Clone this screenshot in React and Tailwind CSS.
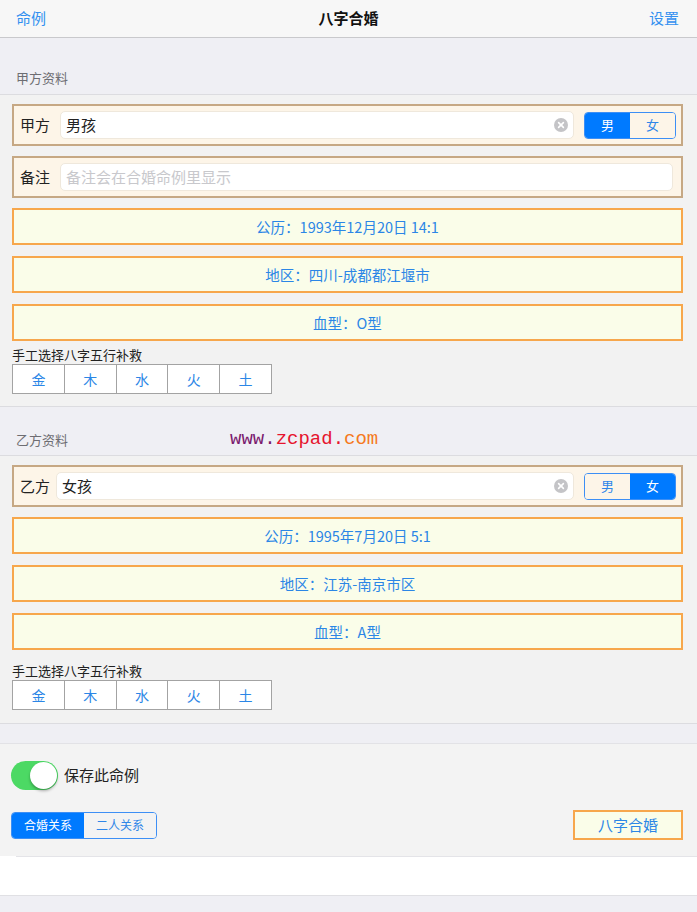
import React from "react";

const font = { fontFamily: '"Noto Sans CJK SC", "Noto Sans", sans-serif' };

function ClearIcon() {
  return (
    <svg width="14" height="14" viewBox="0 0 14 14" className="shrink-0">
      <circle cx="7" cy="7" r="7" fill="#c4c4c7" />
      <path d="M4.6 4.6 L9.4 9.4 M9.4 4.6 L4.6 9.4" stroke="#fff" strokeWidth="1.6" strokeLinecap="round" />
    </svg>
  );
}

function Gender({ male }) {
  return (
    <div className="flex w-[92px] h-[27px] border border-[#3d8ff5] rounded-[4px] overflow-hidden text-[13px] shrink-0">
      <div className={"flex-1 flex items-center justify-center " + (male ? "bg-[#007aff] text-white" : "bg-[#fdf5e8] text-[#2f86e8]")}>男</div>
      <div className={"flex-1 flex items-center justify-center " + (!male ? "bg-[#007aff] text-white" : "bg-[#fdf5e8] text-[#2f86e8]")}>女</div>
    </div>
  );
}

function NameRow({ label, value, male, labelW }) {
  return (
    <div className="flex items-center h-[42px] border-2 border-[#c6a884] bg-[#fdf5e8] pl-[6px] pr-[5px]">
      <span className="text-[15px] text-[#222] shrink-0" style={{ width: labelW }}>{label}</span>
      <div className="flex-1 h-[28px] bg-white rounded-[5px] border border-[#efe8dc] flex items-center pl-[5px] pr-[5px]">
        <span className="flex-1 text-[15px] text-[#222]">{value}</span>
        <ClearIcon />
      </div>
      <div className="w-[10px] shrink-0" />
      <Gender male={male} />
    </div>
  );
}

function NoteRow() {
  return (
    <div className="flex items-center h-[42px] border-2 border-[#c6a884] bg-[#fdf5e8] pl-[6px] pr-[8px]">
      <span className="text-[15px] text-[#222] w-[40px] shrink-0">备注</span>
      <div className="flex-1 h-[28px] bg-white rounded-[5px] border border-[#efe8dc] flex items-center pl-[5px]">
        <span className="text-[15px] text-[#c8c8cc]">备注会在合婚命例里显示</span>
      </div>
    </div>
  );
}

function InfoRow({ text }) {
  return (
    <div className="h-[37px] border-2 border-[#f7a74c] bg-[#fafde9] flex items-center justify-center text-[14.5px] text-[#2b86e6]">
      {text}
    </div>
  );
}

function Elements() {
  const items = ["金", "木", "水", "火", "土"];
  return (
    <div className="flex flex-col">
      <div className="text-[13px] text-[#222] leading-[18px] h-[18px]">手工选择八字五行补救</div>
      <div className="flex w-[260px] h-[30px] border border-[#a3a3a3] bg-white">
        {items.map((t, i) => (
          <div key={t} className={"flex-1 flex items-center justify-center text-[14px] text-[#2b86e6] " + (i > 0 ? "border-l border-[#a3a3a3]" : "")}>
            {t}
          </div>
        ))}
      </div>
    </div>
  );
}

export default function App() {
  return (
    <div className="w-[697px] h-[912px] bg-[#efeff4] flex flex-col overflow-hidden" style={font}>
      {/* Nav */}
      <div className="h-[38px] bg-[#f7f7f7] border-b border-[#c9c9cc] flex items-center justify-between pl-[16px] pr-[18px] shrink-0 relative">
        <span className="text-[15px] text-[#3390f0]">命例</span>
        <span className="absolute left-0 right-0 text-center text-[15px] font-bold text-[#111]">八字合婚</span>
        <span className="text-[15px] text-[#3390f0]">设置</span>
      </div>

      {/* Header 1 */}
      <div className="h-[57px] flex items-end pl-[16px] pb-[7px] border-b border-[#dcdce0] shrink-0">
        <span className="text-[13px] text-[#6d6d72]">甲方资料</span>
      </div>

      {/* Section 1 */}
      <div className="bg-[#f2f2f2] pt-[9px] pb-[12px] px-[12px] pr-[14px] flex flex-col border-b border-[#dcdce0] shrink-0">
        <NameRow label="甲方" value="男孩" male={true} labelW="40px" />
        <div className="h-[10px]" />
        <NoteRow />
        <div className="h-[10px]" />
        <InfoRow text="公历：1993年12月20日 14:1" />
        <div className="h-[11px]" />
        <InfoRow text="地区：四川-成都都江堰市" />
        <div className="h-[11px]" />
        <InfoRow text="血型：O型" />
        <div className="h-[5px]" />
        <Elements />
      </div>

      {/* Header 2 */}
      <div className="h-[49px] flex items-end pl-[16px] pb-[6px] border-b border-[#dcdce0] shrink-0 relative">
        <span className="text-[13px] text-[#6d6d72]">乙方资料</span>
        <span className="ml-[162px] mb-[-2px] text-[19px] leading-[24px]" style={{ fontFamily: '"Liberation Mono", "DejaVu Sans Mono", monospace' }}>
          <span className="text-[#7a1a6e]">www.</span>
          <span className="text-[#e6142e]">zcpad.</span>
          <span className="text-[#f57a1e]">com</span>
        </span>
      </div>

      {/* Section 2 */}
      <div className="bg-[#f2f2f2] pt-[9px] pb-[13px] px-[12px] pr-[14px] flex flex-col border-b border-[#dcdce0] shrink-0">
        <NameRow label="乙方" value="女孩" male={false} labelW="36px" />
        <div className="h-[10px]" />
        <InfoRow text="公历：1995年7月20日 5:1" />
        <div className="h-[11px]" />
        <InfoRow text="地区：江苏-南京市区" />
        <div className="h-[11px]" />
        <InfoRow text="血型：A型" />
        <div className="h-[12px]" />
        <Elements />
      </div>

      <div className="h-[19px] shrink-0" />

      {/* Section 3 */}
      <div className="bg-[#f3f3f3] h-[113px] border-t border-[#e2e2e6] pt-[17px] px-[11px] pr-[14px] flex flex-col shrink-0">
        <div className="flex items-center gap-[6px]">
          <div className="w-[47px] h-[29px] rounded-full bg-[#4cd964] relative">
            <div className="absolute right-[1px] top-[1px] w-[27px] h-[27px] rounded-full bg-white shadow-[0_2px_3px_rgba(0,0,0,0.3)]" />
          </div>
          <span className="text-[15px] text-[#222]">保存此命例</span>
        </div>
        <div className="flex items-center justify-between mt-[20px]">
          <div className="flex w-[146px] h-[27px] border border-[#3d8ff5] rounded-[4px] overflow-hidden text-[12px]">
            <div className="flex-1 flex items-center justify-center bg-[#007aff] text-white">合婚关系</div>
            <div className="flex-1 flex items-center justify-center bg-[#f3f3f3] text-[#2f86e8]">二人关系</div>
          </div>
          <div className="w-[110px] h-[30px] border-2 border-[#f7a74c] bg-[#fafde9] flex items-center justify-center text-[15px] text-[#2b86e6]">
            八字合婚
          </div>
        </div>
      </div>

      {/* White area */}
      <div className="h-[40px] bg-white border-b border-[#e0e0e4] shrink-0 flex flex-col">
        <div className="ml-[16px] border-t border-[#e4e4e8]" />
      </div>
    </div>
  );
}
